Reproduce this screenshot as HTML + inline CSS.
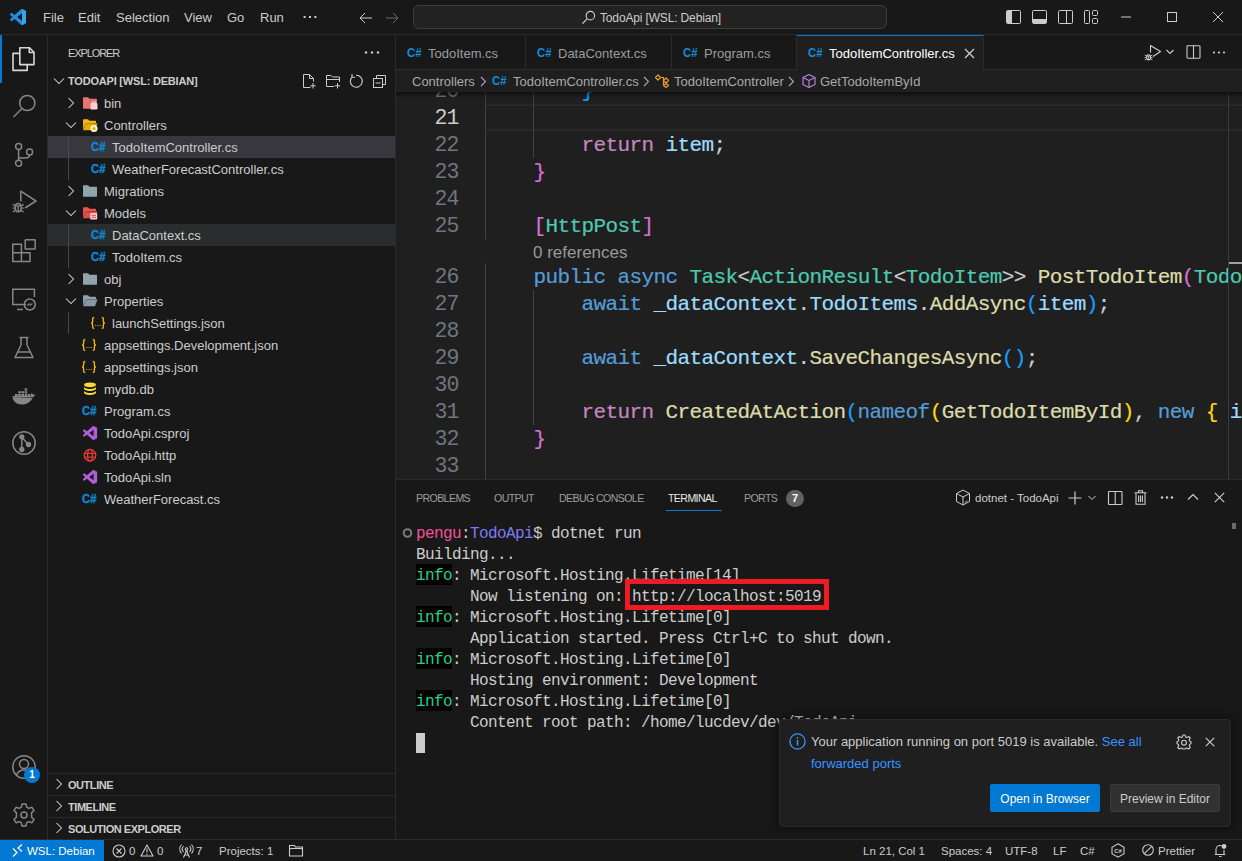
<!DOCTYPE html>
<html><head><meta charset="utf-8">
<style>
*{box-sizing:border-box;margin:0;padding:0}
html,body{width:1242px;height:861px;overflow:hidden;background:#181818;font-family:"Liberation Sans",sans-serif;font-size:13px;color:#cccccc}
.a{position:absolute}
svg{position:absolute;display:block;overflow:visible}
#title{position:absolute;left:0;top:0;width:1242px;height:35px;background:#181818;border-bottom:1px solid #2b2b2b}
.menu{position:absolute;top:10px;font-size:13px;line-height:15px;color:#cccccc}
#cmd{position:absolute;left:413px;top:5px;width:474px;height:24px;background:#222222;border:1px solid #3e3e3e;border-radius:6px}
#act{position:absolute;left:0;top:35px;width:48px;height:804px;background:#181818;border-right:1px solid #2b2b2b}
#side{position:absolute;left:48px;top:35px;width:348px;height:804px;background:#181818;border-right:1px solid #2b2b2b}
.row{position:absolute;left:0;width:347px;height:22px;font-size:13px;color:#cccccc;white-space:nowrap}
.row .t{position:absolute;top:4px;line-height:15px}
.cs{position:absolute;top:5px;font-family:"Liberation Sans",sans-serif;font-weight:bold;font-size:12px;line-height:12px;color:#0f8fdb;letter-spacing:-0.5px}
.js{position:absolute;top:4px;font-family:"Liberation Mono",monospace;font-weight:bold;font-size:11px;line-height:13px;color:#f5c518;letter-spacing:-1.5px}
.vh{position:absolute;left:0;width:347px;height:22px;border-top:1px solid #2b2b2b;font-weight:bold;font-size:11px;color:#cccccc}
#tabs{position:absolute;left:396px;top:35px;width:846px;height:35px;background:#181818;border-bottom:1px solid #2b2b2b}
.tab{position:absolute;top:0;height:35px;border-right:1px solid #2b2b2b;background:#181818;color:#9d9d9d;font-size:13px;white-space:nowrap}
.tab .t{position:absolute;top:11px;line-height:15px}
.tab .cs{top:12px}
#crumb{position:absolute;left:396px;top:70px;width:846px;height:22px;background:#1f1f1f;font-size:13px;color:#a9a9a9;white-space:nowrap}
#crumb .t{position:absolute;top:4px;line-height:15px}
#code{position:absolute;left:396px;top:92px;width:846px;height:387px;background:#1f1f1f;overflow:hidden}
.ln{position:absolute;left:0;width:62.6px;text-align:right;font-family:"Liberation Mono",monospace;font-size:21.5px;letter-spacing:-0.9px;color:#6e7681;height:27px;line-height:29px}
.cl{position:absolute;left:89.5px;font-family:"Liberation Mono",monospace;font-size:21px;letter-spacing:-0.6px;color:#cccccc;height:27px;line-height:29px;white-space:pre;-webkit-text-stroke:0.2px}
.k{color:#569cd6}.c{color:#c586c0}.ty{color:#4ec9b0}.f{color:#dcdcaa}.v{color:#9cdcfe}.b1{color:#ffd700}.b2{color:#da70d6}.b3{color:#179fff}
#panel{position:absolute;left:396px;top:479px;width:846px;height:360px;background:#181818;border-top:1px solid #2b2b2b}
.ph{position:absolute;top:12px;font-size:10.6px;line-height:13px;color:#9d9d9d;white-space:nowrap;letter-spacing:-0.6px}
.term{position:absolute;left:20px;font-family:"Liberation Mono",monospace;font-size:16px;letter-spacing:-0.6px;color:#cccccc;height:23px;padding-top:2px;line-height:21px;white-space:pre}
.g{color:#23d18b;background:#000000;display:inline-block;height:21px;margin-top:-2px;padding-top:2px;line-height:21px;vertical-align:top}
#status{position:absolute;left:0;top:839px;width:1242px;height:22px;background:#181818;border-top:1px solid #2b2b2b}
.st{position:absolute;top:4px;font-size:11.5px;line-height:14px;color:#cccccc;white-space:nowrap}
#notif{position:absolute;left:779px;top:719px;width:452px;height:108px;background:#1f1f1f;border:1px solid #2b2b2b;border-radius:4px;box-shadow:0 0 8px 2px rgba(0,0,0,0.45)}
.btn{position:absolute;height:28px;border-radius:2px;font-size:13px;line-height:30px;text-align:center;white-space:nowrap}
</style></head><body>
<div id="title">
  <svg style="left:10px;top:9px" width="16" height="16" viewBox="0 0 100 100"><path fill="#1f8ee0" d="M96.46 10.8L75.86.87a6.22 6.22 0 0 0-7.12 1.2L29.2 38.04 12.04 25.01a4.16 4.16 0 0 0-5.32.24L1.2 30.26a4.17 4.17 0 0 0 0 6.16L16.08 50 1.2 63.58a4.17 4.17 0 0 0 0 6.16l5.52 5.02a4.16 4.16 0 0 0 5.32.24l17.16-13.04 39.53 36.06a6.22 6.22 0 0 0 7.12 1.2l20.6-9.92A6.24 6.24 0 0 0 100 83.68V16.32a6.24 6.24 0 0 0-3.54-5.52zM75.02 72.7L45.02 50l30-22.7z"/><path fill="#3aa6f2" d="M75.86.87a6.22 6.22 0 0 1 7.12 0L96.46 10.8A6.24 6.24 0 0 1 100 16.32v67.36a6.24 6.24 0 0 1-3.54 5.52L82.98 99.13a6.22 6.22 0 0 1-7.12 0z" opacity="0.9"/></svg>
  <div class="menu" style="left:43px">File</div>
  <div class="menu" style="left:78px">Edit</div>
  <div class="menu" style="left:116px">Selection</div>
  <div class="menu" style="left:184px">View</div>
  <div class="menu" style="left:227px">Go</div>
  <div class="menu" style="left:260px">Run</div>
  <svg style="left:302px;top:16px" width="16" height="4"><rect x="1.6" y="0" width="2" height="2" fill="#cccccc"/><rect x="7" y="0" width="2" height="2" fill="#cccccc"/><rect x="12.4" y="0" width="2" height="2" fill="#cccccc"/></svg>
  <svg style="left:358px;top:10px" width="16" height="16" viewBox="0 0 16 16"><path d="M2 8h12M2 8l5-5M2 8l5 5" stroke="#cccccc" stroke-width="1" fill="none"/></svg>
  <svg style="left:384px;top:10px" width="16" height="16" viewBox="0 0 16 16"><path d="M2 8h12M14 8l-5-5M14 8l-5 5" stroke="#6b6b6b" stroke-width="1" fill="none"/></svg>
  <div id="cmd">
    <svg style="left:167px;top:4px" width="15" height="15" viewBox="0 0 16 16"><circle cx="10" cy="6" r="4.5" stroke="#cccccc" stroke-width="1.2" fill="none"/><path d="M6.8 9.2L1.5 14.5" stroke="#cccccc" stroke-width="1.4"/></svg>
    <div class="a" style="left:186px;top:5px;font-size:12px;line-height:15px;color:#cccccc;letter-spacing:-0.15px">TodoApi [WSL: Debian]</div>
  </div>
  <svg style="left:1006px;top:10px" width="15" height="14" viewBox="0 0 15 14"><rect x="0.5" y="0.5" width="14" height="13" rx="1" stroke="#cccccc" fill="none"/><rect x="1" y="1" width="5" height="12" fill="#cccccc"/></svg>
  <svg style="left:1032px;top:10px" width="15" height="14" viewBox="0 0 15 14"><rect x="0.5" y="0.5" width="14" height="13" rx="1" stroke="#cccccc" fill="none"/><rect x="1" y="9" width="13" height="4" fill="#cccccc"/></svg>
  <svg style="left:1058px;top:10px" width="15" height="14" viewBox="0 0 15 14"><rect x="0.5" y="0.5" width="14" height="13" rx="1" stroke="#cccccc" fill="none"/><path d="M8.5 1v12" stroke="#cccccc"/></svg>
  <svg style="left:1084px;top:10px" width="15" height="14" viewBox="0 0 15 14"><rect x="0.5" y="0.5" width="5" height="13" rx="1" stroke="#cccccc" fill="none"/><rect x="8.5" y="0.5" width="5" height="5" rx="1" stroke="#cccccc" fill="none"/><rect x="8.5" y="8.5" width="5" height="5" rx="1" stroke="#cccccc" fill="none"/></svg>
  <svg style="left:1121px;top:16px" width="10" height="2"><rect x="0" y="0.5" width="10" height="1" fill="#cccccc"/></svg>
  <svg style="left:1167px;top:12px" width="10" height="10" viewBox="0 0 10 10"><rect x="0.5" y="0.5" width="9" height="9" stroke="#cccccc" fill="none"/></svg>
  <svg style="left:1213px;top:12px" width="10" height="10" viewBox="0 0 10 10"><path d="M0 0L10 10M10 0L0 10" stroke="#cccccc" stroke-width="1"/></svg>
</div>
<div id="act">
  <div class="a" style="left:0;top:0;width:2px;height:48px;background:#0078d4"></div>
  <!-- explorer -->
  <svg style="left:12px;top:12px" width="24" height="24" viewBox="0 0 24 24" fill="none" stroke="#d7d7d7" stroke-width="1.6" stroke-linejoin="round"><path d="M7.8 0.8H17.5L22 5.3V17.6H7.8Z"/><path d="M17.3 0.8V5.5H22"/><path d="M7.8 6.4H1V23.4H15.2V17.6"/></svg>
  <!-- search -->
  <svg style="left:12px;top:59px" width="24" height="24" viewBox="0 0 24 24" fill="none" stroke="#868686" stroke-width="1.5"><circle cx="15.3" cy="9" r="7.6"/><path d="M10 14.5L1.5 23"/></svg>
  <!-- scm -->
  <svg style="left:12px;top:108px" width="24" height="24" viewBox="0 0 24 24" fill="none" stroke="#868686" stroke-width="1.5"><circle cx="6.6" cy="3.6" r="3"/><circle cx="6.6" cy="20.2" r="3"/><circle cx="17.6" cy="9" r="3"/><path d="M6.6 6.6V17.2M17.6 12C17.6 14 16 15 13 15H6.6"/></svg>
  <!-- debug -->
  <svg style="left:12px;top:155px" width="24" height="24" viewBox="0 0 24 24" fill="none" stroke="#868686" stroke-width="1.5" stroke-linejoin="round"><path d="M8.8 11.5V1.2L24 11L13 18"/><path d="M3.2 17.5C3.2 15 4.4 13.6 6.2 13.6C8 13.6 9.2 15 9.2 17.5C9.2 20.2 8 21.8 6.2 21.8C4.4 21.8 3.2 20.2 3.2 17.5Z"/><path d="M3.6 15.8H8.8M6.2 15.8V21.8M0.8 14.4L3.4 16M11.6 14.4L9 16M0.6 18.2H3.2M11.8 18.2H9.2M0.8 22L3.4 20.4M11.6 22L9 20.4" stroke-width="1.3"/></svg>
  <!-- extensions -->
  <svg style="left:12px;top:204px" width="24" height="24" viewBox="0 0 24 24" fill="none" stroke="#868686" stroke-width="1.5"><path d="M0.8 5.2H9.4V13.8H18V22.4H0.8Z"/><path d="M0.8 13.8H9.4V22.4"/><rect x="13.2" y="0.8" width="10" height="9.2" rx="0.5"/></svg>
  <!-- remote explorer -->
  <svg style="left:12px;top:253px" width="24" height="24" viewBox="0 0 24 24" fill="none" stroke="#868686" stroke-width="1.5"><path d="M14 16.5H0.8V1.2H22.4V9"/><path d="M5 21.5H11"/><circle cx="17.8" cy="16.5" r="5.5"/><path d="M15.2 17.6L17.8 15.6M17.8 17.4L20.4 15.4" stroke-width="1.2"/></svg>
  <!-- testing -->
  <svg style="left:12px;top:301px" width="24" height="24" viewBox="0 0 24 24" fill="none" stroke="#868686" stroke-width="1.5" stroke-linejoin="round"><path d="M7.5 1.5H16.5M9 1.5V9L3 21.5H21L15 9V1.5"/><path d="M5.5 16H18.5"/></svg>
  <!-- docker -->
  <svg style="left:12px;top:349px" width="24" height="24" viewBox="0 0 24 24"><path fill="#868686" d="M0.5 13.2H21.5C22 12 22.5 11.5 23.8 11.3C23 10.6 22 10.4 21.2 10.8C20.8 9.8 20.2 9.3 19.6 9L19 10.3V12H0.5C0.5 17.5 4.5 20.5 10 20.5C15 20.5 18.5 18 20.5 14Z"/><g fill="#868686"><rect x="3" y="10" width="2.6" height="2.2"/><rect x="6.2" y="10" width="2.6" height="2.2"/><rect x="9.4" y="10" width="2.6" height="2.2"/><rect x="12.6" y="10" width="2.6" height="2.2"/><rect x="15.8" y="10" width="2.6" height="2.2"/><rect x="6.2" y="7.2" width="2.6" height="2.2"/><rect x="9.4" y="7.2" width="2.6" height="2.2"/><rect x="12.6" y="7.2" width="2.6" height="2.2"/><rect x="12.6" y="4.4" width="2.6" height="2.2"/></g></svg>
  <!-- git graph -->
  <svg style="left:12px;top:396px" width="24" height="24" viewBox="0 0 24 24" fill="none" stroke="#868686" stroke-width="1.5"><circle cx="12" cy="12" r="11.2"/><path d="M9.8 6V18.5M9.8 6L16.2 13.5"/><circle cx="9.8" cy="5.8" r="1.9" fill="#868686"/><circle cx="16.5" cy="13.5" r="1.9" fill="#868686"/><circle cx="9.8" cy="18.5" r="1.9" fill="#868686"/></svg>
  <!-- accounts -->
  <svg style="left:12px;top:720px" width="24" height="24" viewBox="0 0 24 24" fill="none" stroke="#868686" stroke-width="1.5"><circle cx="12" cy="12" r="11.2"/><circle cx="12" cy="9" r="4.5"/><path d="M4.5 20C6 16.5 9 15 12 15C15 15 18 16.5 19.5 20"/></svg>
  <div class="a" style="left:24px;top:732px;width:16px;height:16px;border-radius:8px;background:#0078d4;color:#ffffff;font-size:10px;font-weight:bold;line-height:16px;text-align:center">1</div>
  <!-- settings -->
  <svg style="left:12px;top:768px" width="24" height="24" viewBox="0 0 24 24" fill="none" stroke="#868686" stroke-width="1.5" stroke-linejoin="round"><path d="M10 1H14L14.6 4.2L16.8 5.4L19.8 4.2L22 7.6L19.6 9.8V14.2L22 16.4L19.8 19.8L16.8 18.6L14.6 19.8L14 23H10L9.4 19.8L7.2 18.6L4.2 19.8L2 16.4L4.4 14.2V9.8L2 7.6L4.2 4.2L7.2 5.4L9.4 4.2Z"/><circle cx="12" cy="12" r="3"/></svg>
</div>
<div id="side">
<div class="a" style="left:20px;top:12px;font-size:11px;line-height:13px;color:#cccccc;letter-spacing:-1.1px">EXPLORER</div>
<svg style="left:316px;top:16px" width="16" height="4"><circle cx="2" cy="1.5" r="1.2" fill="#cccccc"/><circle cx="8" cy="1.5" r="1.2" fill="#cccccc"/><circle cx="14" cy="1.5" r="1.2" fill="#cccccc"/></svg>
<div class="row" style="top:35px">
<svg style="left:5px;top:7px" width="12" height="8" viewBox="0 0 12 8"><path d="M1 1.5L6 6.5L11 1.5" stroke="#cccccc" stroke-width="1.05" fill="none"/></svg>
<div class="a" style="left:20px;top:5px;font-size:11px;font-weight:bold;line-height:13px;color:#cccccc;letter-spacing:-0.2px">TODOAPI [WSL: DEBIAN]</div>
<svg style="left:253px;top:3px" width="16" height="16" viewBox="0 0 16 16" fill="none" stroke="#cccccc" stroke-width="1"><path d="M9.5 14.5H2.5V1.5H8.5L12.5 5.5V8.5"/><path d="M8.5 1.5V5.5H12.5"/><path d="M12 10V15.5M9.3 12.8H14.7"/></svg>
<svg style="left:277px;top:3px" width="16" height="16" viewBox="0 0 16 16" fill="none" stroke="#cccccc" stroke-width="1"><path d="M9 13.5H1.5V2.5H6L7.5 4H14.5V9"/><path d="M1.5 6.5H14.5"/><path d="M12.5 10V15.5M9.8 12.8H15.2"/></svg>
<svg style="left:300px;top:3px" width="16" height="16" viewBox="0 0 16 16" fill="none" stroke="#cccccc" stroke-width="1.1"><path d="M4.2 3.8A6 6 0 1 0 8 2.2"/><path d="M4 1V4.2H7.2" /></svg>
<svg style="left:324px;top:3px" width="16" height="16" viewBox="0 0 16 16" fill="none" stroke="#cccccc" stroke-width="1"><rect x="1.5" y="5.5" width="9" height="9"/><path d="M4.5 5.5V2.5H13.5V11.5H10.5"/><path d="M3.5 10H8.5"/></svg>
</div>
<div class="row" style="top:57px;">
<svg style="left:19px;top:5px" width="8" height="12" viewBox="0 0 8 12"><path d="M1.5 1L6.5 6L1.5 11" stroke="#cccccc" stroke-width="1.05" fill="none"/></svg>
<svg style="left:34px;top:3px" width="16" height="16" viewBox="0 0 16 16"><path d="M1 3.2C1 2.6 1.4 2.2 2 2.2H6L7.5 3.7H14C14.6 3.7 15 4.1 15 4.7V12.8C15 13.4 14.6 13.8 14 13.8H2C1.4 13.8 1 13.4 1 12.8Z" fill="#e57373"/><rect x="8.5" y="8" width="7" height="6.5" rx="1" fill="#ffcdd2"/><path d="M10.5 8V6.8H13.5V8" stroke="#ffcdd2" stroke-width="1" fill="none"/></svg>
<div class="t" style="left:56px">bin</div>
</div>
<div class="row" style="top:79px;">
<svg style="left:17px;top:7px" width="12" height="8" viewBox="0 0 12 8"><path d="M1 1.5L6 6.5L11 1.5" stroke="#cccccc" stroke-width="1.05" fill="none"/></svg>
<svg style="left:34px;top:3px" width="16" height="16" viewBox="0 0 16 16"><path d="M1 3.2C1 2.6 1.4 2.2 2 2.2H6L7.5 3.7H13C13.6 3.7 14 4.1 14 4.7V6H4L1.2 13Z" fill="#f9b805"/><path d="M4 6.2H15.5L13 13.3H1.2Z" fill="#f9b805" opacity="0.92"/><circle cx="12" cy="11.5" r="3.6" fill="#fff3c4"/><circle cx="12" cy="11.5" r="1.5" fill="#f5a700"/></svg>
<div class="t" style="left:56px">Controllers</div>
</div>
<div class="row" style="top:101px;background:#37373d;">
<div class="a" style="left:20px;top:0;width:1px;height:22px;background:#474747"></div>
<svg style="left:43px;top:3px" width="15" height="16" viewBox="0 0 15 16"><text x="0" y="12.3" font-family="Liberation Sans" font-weight="bold" font-size="12.5" fill="#0a88d6" stroke="#0a88d6" stroke-width="0.35" textLength="14.5" lengthAdjust="spacingAndGlyphs">C#</text></svg>
<div class="t" style="left:64px">TodoItemController.cs</div>
</div>
<div class="row" style="top:123px;">
<div class="a" style="left:20px;top:0;width:1px;height:22px;background:#474747"></div>
<svg style="left:43px;top:3px" width="15" height="16" viewBox="0 0 15 16"><text x="0" y="12.3" font-family="Liberation Sans" font-weight="bold" font-size="12.5" fill="#0a88d6" stroke="#0a88d6" stroke-width="0.35" textLength="14.5" lengthAdjust="spacingAndGlyphs">C#</text></svg>
<div class="t" style="left:64px">WeatherForecastController.cs</div>
</div>
<div class="row" style="top:145px;">
<svg style="left:19px;top:5px" width="8" height="12" viewBox="0 0 8 12"><path d="M1.5 1L6.5 6L1.5 11" stroke="#cccccc" stroke-width="1.05" fill="none"/></svg>
<svg style="left:34px;top:3px" width="16" height="16" viewBox="0 0 16 16"><path d="M1 3.2C1 2.6 1.4 2.2 2 2.2H6L7.5 3.7H14C14.6 3.7 15 4.1 15 4.7V12.8C15 13.4 14.6 13.8 14 13.8H2C1.4 13.8 1 13.4 1 12.8Z" fill="#90a4ae"/></svg>
<div class="t" style="left:56px">Migrations</div>
</div>
<div class="row" style="top:167px;">
<svg style="left:17px;top:7px" width="12" height="8" viewBox="0 0 12 8"><path d="M1 1.5L6 6.5L11 1.5" stroke="#cccccc" stroke-width="1.05" fill="none"/></svg>
<svg style="left:34px;top:3px" width="16" height="16" viewBox="0 0 16 16"><path d="M1 3.2C1 2.6 1.4 2.2 2 2.2H6L7.5 3.7H13C13.6 3.7 14 4.1 14 4.7V6H4L1.2 13Z" fill="#ef5350"/><path d="M4 6.2H15.5L13 13.3H1.2Z" fill="#ef5350" opacity="0.92"/><rect x="8.2" y="8" width="7" height="6.5" rx="1" fill="#ffcdd2"/><path d="M9.5 10.3H14M9.5 12.3H14" stroke="#e53935" stroke-width="0.9"/></svg>
<div class="t" style="left:56px">Models</div>
</div>
<div class="row" style="top:189px;background:#2a2d2e;">
<div class="a" style="left:20px;top:0;width:1px;height:22px;background:#474747"></div>
<svg style="left:43px;top:3px" width="15" height="16" viewBox="0 0 15 16"><text x="0" y="12.3" font-family="Liberation Sans" font-weight="bold" font-size="12.5" fill="#0a88d6" stroke="#0a88d6" stroke-width="0.35" textLength="14.5" lengthAdjust="spacingAndGlyphs">C#</text></svg>
<div class="t" style="left:64px">DataContext.cs</div>
</div>
<div class="row" style="top:211px;">
<div class="a" style="left:20px;top:0;width:1px;height:22px;background:#474747"></div>
<svg style="left:43px;top:3px" width="15" height="16" viewBox="0 0 15 16"><text x="0" y="12.3" font-family="Liberation Sans" font-weight="bold" font-size="12.5" fill="#0a88d6" stroke="#0a88d6" stroke-width="0.35" textLength="14.5" lengthAdjust="spacingAndGlyphs">C#</text></svg>
<div class="t" style="left:64px">TodoItem.cs</div>
</div>
<div class="row" style="top:233px;">
<svg style="left:19px;top:5px" width="8" height="12" viewBox="0 0 8 12"><path d="M1.5 1L6.5 6L1.5 11" stroke="#cccccc" stroke-width="1.05" fill="none"/></svg>
<svg style="left:34px;top:3px" width="16" height="16" viewBox="0 0 16 16"><path d="M1 3.2C1 2.6 1.4 2.2 2 2.2H6L7.5 3.7H14C14.6 3.7 15 4.1 15 4.7V12.8C15 13.4 14.6 13.8 14 13.8H2C1.4 13.8 1 13.4 1 12.8Z" fill="#90a4ae"/></svg>
<div class="t" style="left:56px">obj</div>
</div>
<div class="row" style="top:255px;">
<svg style="left:17px;top:7px" width="12" height="8" viewBox="0 0 12 8"><path d="M1 1.5L6 6.5L11 1.5" stroke="#cccccc" stroke-width="1.05" fill="none"/></svg>
<svg style="left:34px;top:3px" width="16" height="16" viewBox="0 0 16 16"><path d="M1 3.2C1 2.6 1.4 2.2 2 2.2H6L7.5 3.7H13C13.6 3.7 14 4.1 14 4.7V6H4L1.2 13Z" fill="#90a4ae"/><path d="M4 6.2H15.5L13 13.3H1.2Z" fill="#90a4ae" opacity="0.92"/></svg>
<div class="t" style="left:56px">Properties</div>
</div>
<div class="row" style="top:277px;">
<div class="a" style="left:20px;top:0;width:1px;height:22px;background:#474747"></div>
<svg style="left:42px;top:3px" width="16" height="16" viewBox="0 0 16 16"><path d="M4.2 2.5C2.8 2.5 2.6 3.2 2.6 4.2V6.6C2.6 7.4 2.2 7.9 1.2 8C2.2 8.1 2.6 8.6 2.6 9.4V11.8C2.6 12.8 2.8 13.5 4.2 13.5M11.8 2.5C13.2 2.5 13.4 3.2 13.4 4.2V6.6C13.4 7.4 13.8 7.9 14.8 8C13.8 8.1 13.4 8.6 13.4 9.4V11.8C13.4 12.8 13.2 13.5 11.8 13.5" stroke="#f5b800" stroke-width="1.35" fill="none"/><circle cx="5.8" cy="10.5" r="0.6" fill="#f5b800"/><circle cx="8" cy="10.5" r="0.6" fill="#f5b800"/><circle cx="10.2" cy="10.5" r="0.6" fill="#f5b800"/></svg>
<div class="t" style="left:64px">launchSettings.json</div>
</div>
<div class="row" style="top:299px;">
<svg style="left:33px;top:3px" width="16" height="16" viewBox="0 0 16 16"><path d="M4.2 2.5C2.8 2.5 2.6 3.2 2.6 4.2V6.6C2.6 7.4 2.2 7.9 1.2 8C2.2 8.1 2.6 8.6 2.6 9.4V11.8C2.6 12.8 2.8 13.5 4.2 13.5M11.8 2.5C13.2 2.5 13.4 3.2 13.4 4.2V6.6C13.4 7.4 13.8 7.9 14.8 8C13.8 8.1 13.4 8.6 13.4 9.4V11.8C13.4 12.8 13.2 13.5 11.8 13.5" stroke="#f5b800" stroke-width="1.35" fill="none"/><circle cx="5.8" cy="10.5" r="0.6" fill="#f5b800"/><circle cx="8" cy="10.5" r="0.6" fill="#f5b800"/><circle cx="10.2" cy="10.5" r="0.6" fill="#f5b800"/></svg>
<div class="t" style="left:56px">appsettings.Development.json</div>
</div>
<div class="row" style="top:321px;">
<svg style="left:33px;top:3px" width="16" height="16" viewBox="0 0 16 16"><path d="M4.2 2.5C2.8 2.5 2.6 3.2 2.6 4.2V6.6C2.6 7.4 2.2 7.9 1.2 8C2.2 8.1 2.6 8.6 2.6 9.4V11.8C2.6 12.8 2.8 13.5 4.2 13.5M11.8 2.5C13.2 2.5 13.4 3.2 13.4 4.2V6.6C13.4 7.4 13.8 7.9 14.8 8C13.8 8.1 13.4 8.6 13.4 9.4V11.8C13.4 12.8 13.2 13.5 11.8 13.5" stroke="#f5b800" stroke-width="1.35" fill="none"/><circle cx="5.8" cy="10.5" r="0.6" fill="#f5b800"/><circle cx="8" cy="10.5" r="0.6" fill="#f5b800"/><circle cx="10.2" cy="10.5" r="0.6" fill="#f5b800"/></svg>
<div class="t" style="left:56px">appsettings.json</div>
</div>
<div class="row" style="top:343px;">
<svg style="left:34px;top:3px" width="16" height="16" viewBox="0 0 16 16"><ellipse cx="8" cy="3.8" rx="6" ry="2.4" fill="#fdd835"/><path d="M2 5.5C2 7 4.7 8 8 8C11.3 8 14 7 14 5.5V7.5C14 9 11.3 10 8 10C4.7 10 2 9 2 7.5Z" fill="#fdd835"/><path d="M2 9.5C2 11 4.7 12 8 12C11.3 12 14 11 14 9.5V11.5C14 13 11.3 14 8 14C4.7 14 2 13 2 11.5Z" fill="#fdd835"/></svg>
<div class="t" style="left:56px">mydb.db</div>
</div>
<div class="row" style="top:365px;">
<svg style="left:34px;top:3px" width="15" height="16" viewBox="0 0 15 16"><text x="0" y="12.3" font-family="Liberation Sans" font-weight="bold" font-size="12.5" fill="#0a88d6" stroke="#0a88d6" stroke-width="0.35" textLength="14.5" lengthAdjust="spacingAndGlyphs">C#</text></svg>
<div class="t" style="left:56px">Program.cs</div>
</div>
<div class="row" style="top:387px;">
<svg style="left:34px;top:3px" width="16" height="16" viewBox="-6 -6 112 112"><path fill="#b15cd9" d="M96.46 10.8L75.86.87a6.22 6.22 0 0 0-7.12 1.2L29.2 38.04 12.04 25.01a4.16 4.16 0 0 0-5.32.24L1.2 30.26a4.17 4.17 0 0 0 0 6.16L16.08 50 1.2 63.58a4.17 4.17 0 0 0 0 6.16l5.52 5.02a4.16 4.16 0 0 0 5.32.24l17.16-13.04 39.53 36.06a6.22 6.22 0 0 0 7.12 1.2l20.6-9.92A6.24 6.24 0 0 0 100 83.68V16.32a6.24 6.24 0 0 0-3.54-5.52zM75.02 72.7L45.02 50l30-22.7z"/></svg>
<div class="t" style="left:56px">TodoApi.csproj</div>
</div>
<div class="row" style="top:409px;">
<svg style="left:34px;top:3px" width="16" height="16" viewBox="0 0 16 16" fill="none" stroke="#e53935" stroke-width="1.3"><circle cx="8" cy="8.2" r="5.8"/><ellipse cx="8" cy="8.2" rx="2.4" ry="5.8"/><path d="M2.2 6.3H13.8M2.2 10.1H13.8"/></svg>
<div class="t" style="left:56px">TodoApi.http</div>
</div>
<div class="row" style="top:431px;">
<svg style="left:34px;top:3px" width="16" height="16" viewBox="-6 -6 112 112"><path fill="#b15cd9" d="M96.46 10.8L75.86.87a6.22 6.22 0 0 0-7.12 1.2L29.2 38.04 12.04 25.01a4.16 4.16 0 0 0-5.32.24L1.2 30.26a4.17 4.17 0 0 0 0 6.16L16.08 50 1.2 63.58a4.17 4.17 0 0 0 0 6.16l5.52 5.02a4.16 4.16 0 0 0 5.32.24l17.16-13.04 39.53 36.06a6.22 6.22 0 0 0 7.12 1.2l20.6-9.92A6.24 6.24 0 0 0 100 83.68V16.32a6.24 6.24 0 0 0-3.54-5.52zM75.02 72.7L45.02 50l30-22.7z"/></svg>
<div class="t" style="left:56px">TodoApi.sln</div>
</div>
<div class="row" style="top:453px;">
<svg style="left:34px;top:3px" width="15" height="16" viewBox="0 0 15 16"><text x="0" y="12.3" font-family="Liberation Sans" font-weight="bold" font-size="12.5" fill="#0a88d6" stroke="#0a88d6" stroke-width="0.35" textLength="14.5" lengthAdjust="spacingAndGlyphs">C#</text></svg>
<div class="t" style="left:56px">WeatherForecast.cs</div>
</div>
<div class="vh" style="top:738px">
<svg style="left:7px;top:4px" width="8" height="12" viewBox="0 0 8 12"><path d="M1.5 1L6.5 6L1.5 11" stroke="#cccccc" stroke-width="1.05" fill="none"/></svg>
<div class="a" style="left:20px;top:5px;line-height:13px;letter-spacing:-0.45px">OUTLINE</div>
</div>
<div class="vh" style="top:760px">
<svg style="left:7px;top:4px" width="8" height="12" viewBox="0 0 8 12"><path d="M1.5 1L6.5 6L1.5 11" stroke="#cccccc" stroke-width="1.05" fill="none"/></svg>
<div class="a" style="left:20px;top:5px;line-height:13px;letter-spacing:-0.45px">TIMELINE</div>
</div>
<div class="vh" style="top:782px">
<svg style="left:7px;top:4px" width="8" height="12" viewBox="0 0 8 12"><path d="M1.5 1L6.5 6L1.5 11" stroke="#cccccc" stroke-width="1.05" fill="none"/></svg>
<div class="a" style="left:20px;top:5px;line-height:13px;letter-spacing:-0.45px">SOLUTION EXPLORER</div>
</div>
</div><div id="tabs">
<div class="tab" style="left:0px;width:130px;border-bottom:1px solid #2b2b2b">
<svg style="left:11px;top:10px" width="15" height="16" viewBox="0 0 15 16"><text x="0" y="12.3" font-family="Liberation Sans" font-weight="bold" font-size="12.5" fill="#0f8fdb" textLength="14.5" lengthAdjust="spacingAndGlyphs">C#</text></svg>
<div class="t" style="left:32px">TodoItem.cs</div>
</div>
<div class="tab" style="left:130px;width:146px;border-bottom:1px solid #2b2b2b">
<svg style="left:11px;top:10px" width="15" height="16" viewBox="0 0 15 16"><text x="0" y="12.3" font-family="Liberation Sans" font-weight="bold" font-size="12.5" fill="#0f8fdb" textLength="14.5" lengthAdjust="spacingAndGlyphs">C#</text></svg>
<div class="t" style="left:32px">DataContext.cs</div>
</div>
<div class="tab" style="left:276px;width:125px;border-bottom:1px solid #2b2b2b">
<svg style="left:11px;top:10px" width="15" height="16" viewBox="0 0 15 16"><text x="0" y="12.3" font-family="Liberation Sans" font-weight="bold" font-size="12.5" fill="#0f8fdb" textLength="14.5" lengthAdjust="spacingAndGlyphs">C#</text></svg>
<div class="t" style="left:32px">Program.cs</div>
</div>
<div class="tab" style="left:401px;width:187px;background:#1f1f1f;color:#ffffff;border-top:1px solid #0078d4;height:35px">
<svg style="left:11px;top:9px" width="15" height="16" viewBox="0 0 15 16"><text x="0" y="12.3" font-family="Liberation Sans" font-weight="bold" font-size="12.5" fill="#0f8fdb" textLength="14.5" lengthAdjust="spacingAndGlyphs">C#</text></svg>
<div class="t" style="left:32px;top:10px">TodoItemController.cs</div>
<svg style="left:167px;top:12px" width="11" height="11" viewBox="0 0 11 11"><path d="M1 1L10 10M10 1L1 10" stroke="#cccccc" stroke-width="1.3"/></svg>
</div>
<svg style="left:748px;top:9px" width="18" height="18" viewBox="0 0 18 18" fill="none" stroke="#cccccc" stroke-width="1.1" stroke-linejoin="round"><path d="M6.5 8.5V1.5L16.5 7.5L9 12.5"/><path d="M2.6 13.2C2.6 11.6 3.4 10.7 4.6 10.7C5.8 10.7 6.6 11.6 6.6 13.2C6.6 14.9 5.8 15.9 4.6 15.9C3.4 15.9 2.6 14.9 2.6 13.2Z"/><path d="M2.8 12H6.4M4.6 12V15.9M0.8 11L2.7 12.2M8.4 11L6.5 12.2M0.6 13.6H2.6M8.6 13.6H6.6M0.8 16L2.7 14.8M8.4 16L6.5 14.8" stroke-width="0.9"/></svg>
<svg style="left:769px;top:13px" width="10" height="8" viewBox="0 0 10 8"><path d="M1.5 2L5 5.5L8.5 2" stroke="#cccccc" stroke-width="1.1" fill="none"/></svg>
<svg style="left:790px;top:10px" width="15" height="14" viewBox="0 0 15 14" fill="none" stroke="#cccccc" stroke-width="1.1"><rect x="1" y="0.8" width="13" height="12.4" rx="0.8"/><path d="M7.5 0.8V13.2"/></svg>
<svg style="left:816px;top:16px" width="14" height="4"><circle cx="2" cy="1.5" r="1.1" fill="#cccccc"/><circle cx="7" cy="1.5" r="1.1" fill="#cccccc"/><circle cx="12" cy="1.5" r="1.1" fill="#cccccc"/></svg>
</div>
<div id="crumb">
<div class="t" style="left:16px">Controllers</div>
<svg style="left:84px;top:6px" width="7" height="11" viewBox="0 0 7 11"><path d="M1 1L5.5 5.5L1 10" stroke="#a9a9a9" stroke-width="1.1" fill="none"/></svg>
<svg style="left:96px;top:3px" width="15" height="16" viewBox="0 0 15 16"><text x="0" y="12.3" font-family="Liberation Sans" font-weight="bold" font-size="12.5" fill="#0f8fdb" textLength="14.5" lengthAdjust="spacingAndGlyphs">C#</text></svg>
<div class="t" style="left:117px">TodoItemController.cs</div>
<svg style="left:247px;top:6px" width="7" height="11" viewBox="0 0 7 11"><path d="M1 1L5.5 5.5L1 10" stroke="#a9a9a9" stroke-width="1.1" fill="none"/></svg>
<svg style="left:258px;top:3px" width="16" height="16" viewBox="0 0 16 16" fill="none" stroke="#ee9d28" stroke-width="1.2" stroke-linejoin="round"><path d="M1.5 4.5L4 2L6.5 4.5L4 7Z"/><path d="M9.5 7.5L12 5L14.5 7.5L12 10Z"/><path d="M9.5 12.5L12 10.5L14.5 12.5L12 14.5Z"/><path d="M6.5 4.5H9.5V12.5M9.5 7.5"/></svg>
<div class="t" style="left:278px">TodoItemController</div>
<svg style="left:392px;top:6px" width="7" height="11" viewBox="0 0 7 11"><path d="M1 1L5.5 5.5L1 10" stroke="#a9a9a9" stroke-width="1.1" fill="none"/></svg>
<svg style="left:405px;top:3px" width="16" height="16" viewBox="0 0 16 16" fill="none" stroke="#b180d7" stroke-width="1.2" stroke-linejoin="round"><path d="M8 1.5L14 4.5V11.5L8 14.5L2 11.5V4.5Z"/><path d="M2 4.5L8 7.5L14 4.5M8 7.5V14.5"/></svg>
<div class="t" style="left:424px">GetTodoItemById</div>
</div>
<div class="a" style="left:396px;top:92px;width:846px;height:6px;background:linear-gradient(#000000 0%,rgba(0,0,0,0) 100%);opacity:0.55;z-index:3"></div>
<div id="code">
<div class="a" style="left:90px;top:12px;width:756px;height:27px;border-top:2px solid #282828;border-bottom:2px solid #282828"></div>
<div class="a" style="left:89px;top:0px;width:1px;height:147px;background:#404040"></div>
<div class="a" style="left:89px;top:171px;width:1px;height:216px;background:#404040"></div>
<div class="a" style="left:137px;top:0px;width:1px;height:66px;background:#404040"></div>
<div class="a" style="left:137px;top:198px;width:1px;height:135px;background:#404040"></div>
<div class="ln" style="top:-15px;color:#6e7681">20</div>
<div class="cl" style="top:-15px">        <span class="b3">}</span></div>
<div class="ln" style="top:12px;color:#cccccc">21</div>
<div class="ln" style="top:39px;color:#6e7681">22</div>
<div class="cl" style="top:39px">        <span class="c">return</span> <span class="v">item</span>;</div>
<div class="ln" style="top:66px;color:#6e7681">23</div>
<div class="cl" style="top:66px">    <span class="b2">}</span></div>
<div class="ln" style="top:93px;color:#6e7681">24</div>
<div class="ln" style="top:120px;color:#6e7681">25</div>
<div class="cl" style="top:120px">    <span class="b2">[</span><span class="ty">HttpPost</span><span class="b2">]</span></div>
<div class="ln" style="top:171px;color:#6e7681">26</div>
<div class="cl" style="top:171px">    <span class="k">public</span> <span class="k">async</span> <span class="ty">Task</span>&lt;<span class="ty">ActionResult</span>&lt;<span class="ty">TodoItem</span>&gt;&gt; <span class="f">PostTodoItem</span><span class="b2">(</span><span class="ty">TodoItem</span> <span class="v">item</span><span class="b2">)</span></div>
<div class="ln" style="top:198px;color:#6e7681">27</div>
<div class="cl" style="top:198px">        <span class="k">await</span> <span class="v">_dataContext</span>.<span class="v">TodoItems</span>.<span class="f">AddAsync</span><span class="b3">(</span><span class="v">item</span><span class="b3">)</span>;</div>
<div class="ln" style="top:225px;color:#6e7681">28</div>
<div class="ln" style="top:252px;color:#6e7681">29</div>
<div class="cl" style="top:252px">        <span class="k">await</span> <span class="v">_dataContext</span>.<span class="f">SaveChangesAsync</span><span class="b3">()</span>;</div>
<div class="ln" style="top:279px;color:#6e7681">30</div>
<div class="ln" style="top:306px;color:#6e7681">31</div>
<div class="cl" style="top:306px">        <span class="c">return</span> <span class="f">CreatedAtAction</span><span class="b3">(</span><span class="k">nameof</span><span class="b1">(</span><span class="f">GetTodoItemById</span><span class="b1">)</span>, <span class="k">new</span> <span class="b1">{</span> <span class="v">id</span> = <span class="v">item</span>.<span class="v">Id</span> <span class="b1">}</span>, <span class="v">item</span><span class="b3">)</span>;</div>
<div class="ln" style="top:333px;color:#6e7681">32</div>
<div class="cl" style="top:333px">    <span class="b2">}</span></div>
<div class="ln" style="top:360px;color:#6e7681">33</div>
<div class="ln" style="top:387px;color:#6e7681">34</div>
<div class="cl" style="top:387px"><span class="b1">}</span></div>
<div class="a" style="left:137px;top:149px;font-size:17px;line-height:24px;color:#999999;white-space:nowrap">0 references</div>
<div class="a" style="left:832px;top:0;width:1px;height:387px;background:#3a3a3a"></div>
<div class="a" style="left:833px;top:170px;width:13px;height:2px;background:#a0a0a0"></div>
</div><div id="panel">
<div class="ph" style="left:20px;color:#9d9d9d">PROBLEMS</div>
<div class="ph" style="left:98px;color:#9d9d9d">OUTPUT</div>
<div class="ph" style="left:163px;color:#9d9d9d">DEBUG CONSOLE</div>
<div class="ph" style="left:272px;color:#e7e7e7">TERMINAL</div>
<div class="ph" style="left:348px;color:#9d9d9d">PORTS</div>
<div class="a" style="left:270px;top:30px;width:56px;height:1px;background:#0078d4"></div>
<div class="a" style="left:390px;top:10px;width:18px;height:17px;border-radius:9px;background:#616161;color:#ffffff;font-size:11px;font-weight:bold;line-height:17px;text-align:center">7</div>
<svg style="left:559px;top:9px" width="16" height="17" viewBox="0 0 16 17" fill="none" stroke="#cccccc" stroke-width="1"><path d="M8 1L14.5 4.5V12.5L8 16L1.5 12.5V4.5Z"/><path d="M1.5 4.5L8 8L14.5 4.5"/><path d="M8 8V16" /><path d="M9.8 13.5L12.5 11.8" stroke-width="0.8"/></svg>
<div class="a" style="left:579px;top:11px;font-size:11.5px;line-height:14px;color:#cccccc;white-space:nowrap">dotnet - TodoApi</div>
<svg style="left:672px;top:11px" width="14" height="14" viewBox="0 0 14 14"><path d="M7 0.5V13.5M0.5 7H13.5" stroke="#cccccc" stroke-width="1.2"/></svg>
<svg style="left:692px;top:15px" width="8" height="6" viewBox="0 0 8 6"><path d="M0.5 1L4 4.5L7.5 1" stroke="#cccccc" stroke-width="1" fill="none"/></svg>
<svg style="left:712px;top:11px" width="15" height="14" viewBox="0 0 15 14" fill="none" stroke="#cccccc" stroke-width="1.1"><rect x="0.5" y="0.5" width="13.5" height="13" rx="0.5"/><path d="M7.2 0.5V13.5"/></svg>
<svg style="left:738px;top:10px" width="13" height="15" viewBox="0 0 13 15" fill="none" stroke="#cccccc" stroke-width="1.1"><path d="M0.5 2.8H12.5M4.5 2.5V0.8H8.5V2.5"/><path d="M2 3V14.2H11V3"/><path d="M4.6 5.5V12M6.5 5.5V12M8.4 5.5V12"/></svg>
<svg style="left:764px;top:16px" width="14" height="4"><circle cx="2" cy="1.5" r="1.2" fill="#cccccc"/><circle cx="7" cy="1.5" r="1.2" fill="#cccccc"/><circle cx="12" cy="1.5" r="1.2" fill="#cccccc"/></svg>
<svg style="left:791px;top:13px" width="12" height="8" viewBox="0 0 12 8"><path d="M1 6.5L6 1.5L11 6.5" stroke="#cccccc" stroke-width="1.2" fill="none"/></svg>
<svg style="left:818px;top:12px" width="11" height="11" viewBox="0 0 11 11"><path d="M0.8 0.8L10.2 10.2M10.2 0.8L0.8 10.2" stroke="#cccccc" stroke-width="1.2"/></svg>
<div class="a" style="left:836px;top:43px;width:4px;height:6px;background:#6b6b6b"></div>
<svg style="left:6px;top:48px" width="11" height="11" viewBox="0 0 11 11"><circle cx="5.5" cy="5" r="3.8" stroke="#7a7a7a" stroke-width="2" fill="none"/></svg>
<div class="term" style="top:42px"><span style="color:#f5509a">pengu</span>:<span style="color:#7a7cf7">TodoApi</span>$ dotnet run</div>
<div class="term" style="top:63px">Building...</div>
<div class="term" style="top:84px"><span class="g">info</span>: Microsoft.Hosting.Lifetime[14]</div>
<div class="term" style="top:105px">      Now listening on: http://localhost:5019</div>
<div class="term" style="top:126px"><span class="g">info</span>: Microsoft.Hosting.Lifetime[0]</div>
<div class="term" style="top:147px">      Application started. Press Ctrl+C to shut down.</div>
<div class="term" style="top:168px"><span class="g">info</span>: Microsoft.Hosting.Lifetime[0]</div>
<div class="term" style="top:189px">      Hosting environment: Development</div>
<div class="term" style="top:210px"><span class="g">info</span>: Microsoft.Hosting.Lifetime[0]</div>
<div class="term" style="top:231px">      Content root path: /home/lucdev/dev/TodoApi</div>
<div class="a" style="left:20px;top:253px;width:9px;height:20px;background:#cccccc"></div>
<div class="a" style="left:229px;top:99px;width:204px;height:31px;border:5px solid #ed1c24"></div>
</div>
<div id="status">
<div class="a" style="left:0;top:0px;width:104px;height:21px;background:#0078d4"></div>
<svg style="left:12px;top:4px" width="11" height="13" viewBox="0 0 11 13" fill="none" stroke="#ffffff" stroke-width="1.2"><path d="M1 6L5 10L1 14" transform="translate(0,-1.5)"/><path d="M10 1L6 4.5L10 8" transform="translate(0,-0.5)"/></svg>
<div class="st" style="left:27px;color:#ffffff">WSL: Debian</div>
<svg style="left:112px;top:4px" width="14" height="14" viewBox="0 0 14 14" fill="none" stroke="#cccccc" stroke-width="1.1"><circle cx="7" cy="7" r="6"/><path d="M4.5 4.5L9.5 9.5M9.5 4.5L4.5 9.5"/></svg>
<div class="st" style="left:129px">0</div>
<svg style="left:140px;top:4px" width="14" height="13" viewBox="0 0 14 13" fill="none" stroke="#cccccc" stroke-width="1.1" stroke-linejoin="round"><path d="M7 1L13 12H1Z"/><path d="M7 4.5V8.5M7 9.8V11"/></svg>
<div class="st" style="left:157px">0</div>
<svg style="left:180px;top:4px" width="13" height="14" viewBox="0 0 13 14" fill="none" stroke="#cccccc" stroke-width="1.1"><circle cx="6.5" cy="5" r="1.3"/><path d="M6.5 6.5L3.5 13.5M6.5 6.5L9.5 13.5M4.5 11H8.5"/><path d="M3.5 2A4.5 4.5 0 0 0 3.5 8M9.5 2A4.5 4.5 0 0 1 9.5 8M1.5 0.5A7 7 0 0 0 1.5 9.5M11.5 0.5A7 7 0 0 1 11.5 9.5"/></svg>
<div class="st" style="left:196px">7</div>
<div class="st" style="left:219px">Projects: 1</div>
<svg style="left:289px;top:4px" width="14" height="13" viewBox="0 0 14 13" fill="none" stroke="#cccccc" stroke-width="1.1"><path d="M0.5 1.5H5.5L6.5 3H13.5V12H0.5Z"/><path d="M0.5 4.5H13.5"/></svg>
<div class="st" style="left:863px">Ln 21, Col 1</div>
<div class="st" style="left:941px">Spaces: 4</div>
<div class="st" style="left:1005px">UTF-8</div>
<div class="st" style="left:1053px">LF</div>
<div class="st" style="left:1080px">C#</div>
<svg style="left:1111px;top:3px" width="14" height="15" viewBox="0 0 14 15" fill="none" stroke="#cccccc" stroke-width="1.1"><path d="M7 0.8L13 4.2V10.8L7 14.2L1 10.8V4.2Z"/><text x="3.2" y="9.8" font-family="Liberation Sans" font-weight="bold" font-size="6" fill="#cccccc" stroke="none">C#</text></svg>
<svg style="left:1142px;top:4px" width="12" height="12" viewBox="0 0 12 12" fill="none" stroke="#cccccc" stroke-width="1.1"><circle cx="6" cy="6" r="5.3"/><path d="M2.3 9.7L9.7 2.3"/></svg>
<div class="st" style="left:1158px">Prettier</div>
<svg style="left:1214px;top:3px" width="13" height="15" viewBox="0 0 13 15" fill="none" stroke="#cccccc" stroke-width="1.1"><path d="M2 11V6.5C2 4 3.8 2.5 6 2.5C7 2.5 7.5 2.8 7.5 2.8M10 7V11M0.8 11.5H11.2M5 13.5H7.5"/><circle cx="10" cy="3.5" r="2.4" fill="#cccccc" stroke="none"/></svg>
</div>
<div id="notif">
<svg style="left:9px;top:13px" width="17" height="17" viewBox="0 0 17 17" fill="none" stroke="#3794ff" stroke-width="1.3"><circle cx="8.5" cy="8.5" r="7.6"/><path d="M8.5 7V12.5" stroke-width="1.5"/><circle cx="8.5" cy="4.8" r="0.9" fill="#3794ff" stroke="none"/></svg>
<div class="a" style="left:31px;top:14px;font-size:13px;line-height:15px;color:#cccccc;white-space:nowrap">Your application running on port 5019 is available. <span style="color:#3794ff">See all</span></div>
<div class="a" style="left:31px;top:36px;font-size:13px;line-height:15px;color:#3794ff;white-space:nowrap">forwarded ports</div>
<svg style="left:396px;top:14px" width="16" height="16" viewBox="0 0 16 16" fill="none" stroke="#cccccc" stroke-width="1.1" stroke-linejoin="round"><path d="M6.8 0.8H9.2L9.6 2.8L11 3.5L12.8 2.5L14.3 4.3L13.3 6L13.5 7.5L15.3 8.5V10.8L13.3 11.2L12.5 12.6L13.3 14.3L11.5 15.5M4.5 15.5L2.7 14.3L3.5 12.6L2.7 11.2L0.7 10.8V8.5L2.5 7.5L2.7 6L1.7 4.3L3.2 2.5L5 3.5L6.4 2.8Z" transform="translate(0,-0.3)" opacity="0"/><path d="M6.9 1H9.1L9.5 3L10.8 3.6L12.6 2.5L14.2 4L13.2 5.9L13.8 7.2L15 7.6V9.8L13.8 10.3L13.2 11.6L14.2 13.5L12.6 15L10.8 13.9L9.5 14.5L9.1 15H6.9L6.5 14.5L5.2 13.9L3.4 15L1.8 13.5L2.8 11.6L2.2 10.3L1 9.8V7.6L2.2 7.2L2.8 5.9L1.8 4L3.4 2.5L5.2 3.6L6.5 3Z"/><circle cx="8" cy="8.7" r="2.4"/></svg>
<svg style="left:425px;top:17px" width="10" height="10" viewBox="0 0 10 10"><path d="M0.8 0.8L9.2 9.2M9.2 0.8L0.8 9.2" stroke="#cccccc" stroke-width="1.2"/></svg>
<div class="btn" style="left:210px;top:64px;width:110px;background:#0078d4;color:#ffffff;font-size:12px">Open in Browser</div>
<div class="btn" style="left:330px;top:64px;width:110px;background:#313131;border:1px solid #3a3a3a;line-height:28px;color:#cccccc;font-size:12px">Preview in Editor</div>
</div></body></html>
